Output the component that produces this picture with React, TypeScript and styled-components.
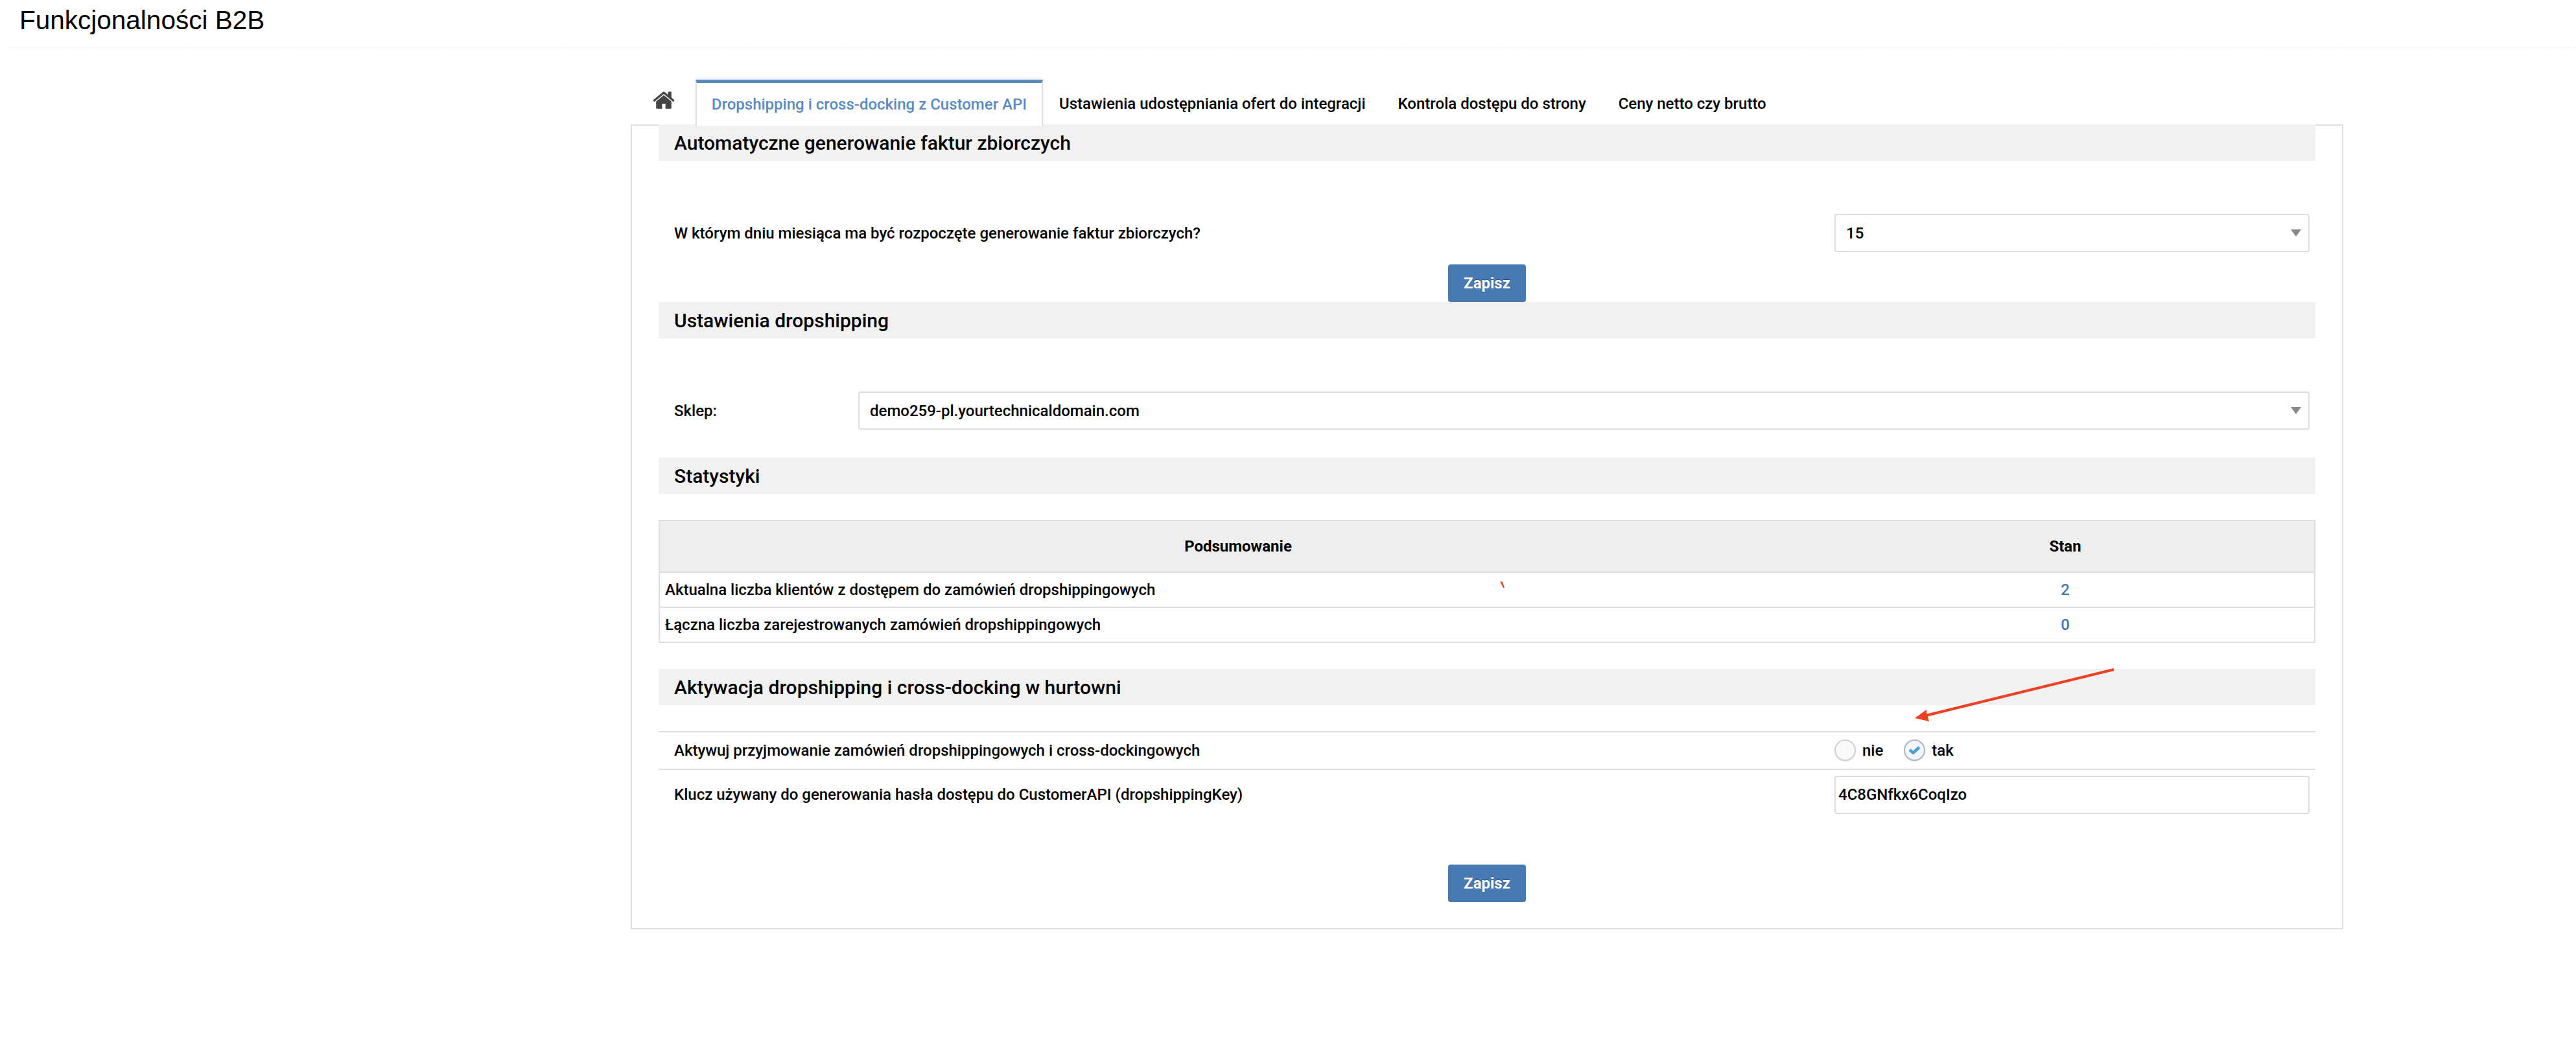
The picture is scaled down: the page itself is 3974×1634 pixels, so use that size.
import styled, { createGlobalStyle } from 'styled-components';

const BORDER = '#dedede';
const BLUE = '#4779b2';

const GlobalStyle = createGlobalStyle`
  html, body {
    margin: 0;
    padding: 0;
    background: #fff;
  }
  body {
    font-family: Roboto, "Liberation Sans", sans-serif;
    font-size: 24px;
    font-weight: 500;
    color: #000;
  }
  * {
    box-sizing: border-box;
  }
`;

const tabs = ['Ustawienia udostępniania ofert do integracji', 'Kontrola dostępu do strony', 'Ceny netto czy brutto'];

export default function App(): JSX.Element {
  return (
    <Page>
      <GlobalStyle />
      <Header>
        <Title>Funkcjonalności B2B</Title>
      </Header>
      <Container>
        <Tabs>
          <HomeTab>
            <svg width="34" height="27" viewBox="0 235 1664 1305" fill="#444">
              <path d="M1408 992v480q0 26-19 45t-45 19h-384v-384h-256v384h-384q-26 0-45-19t-19-45v-480q0-1 .5-3t.5-3l575-474 575 474q1 2 1 6zm223-69l-62 74q-8 9-21 11h-3q-13 0-21-7l-692-577-692 577q-12 8-24 7-13-2-21-11l-62-74q-8-10-7-23.500t11-21.500l719-599q32-26 76-26t76 26l244 204v-195q0-14 9-23t23-9h192q14 0 23 9t9 23v408l219 182q10 8 11 21.500t-7 23.500z" />
            </svg>
          </HomeTab>
          <ActiveTab>Dropshipping i cross-docking z Customer API</ActiveTab>
          {tabs.map((t) => (
            <Tab key={t}>{t}</Tab>
          ))}
        </Tabs>
        <Panel>
          <FirstSectionTitle>Automatyczne generowanie faktur zbiorczych</FirstSectionTitle>
          <FormRow $columns="1fr 733px" $bottom={19}>
            <span>W którym dniu miesiąca ma być rozpoczęte generowanie faktur zbiorczych?</span>
            <SelectWrap>
              <Select defaultValue="15">
                <option>15</option>
              </Select>
            </SelectWrap>
          </FormRow>
          <ButtonRow>
            <SaveButton type="button">Zapisz</SaveButton>
          </ButtonRow>

          <SectionTitle>Ustawienia dropshipping</SectionTitle>
          <FormRow $columns="284px 1fr" $bottom={43}>
            <span>Sklep:</span>
            <SelectWrap>
              <Select defaultValue="demo259-pl.yourtechnicaldomain.com">
                <option>demo259-pl.yourtechnicaldomain.com</option>
              </Select>
            </SelectWrap>
          </FormRow>

          <SectionTitle>Statystyki</SectionTitle>
          <StatsTable>
            <colgroup>
              <col style={{ width: 1785 }} />
              <col />
            </colgroup>
            <thead>
              <tr>
                <th>Podsumowanie</th>
                <th>Stan</th>
              </tr>
            </thead>
            <tbody>
              <tr>
                <td>Aktualna liczba klientów z dostępem do zamówień dropshippingowych</td>
                <ValueCell>2</ValueCell>
              </tr>
              <tr>
                <td>Łączna liczba zarejestrowanych zamówień dropshippingowych</td>
                <ValueCell>0</ValueCell>
              </tr>
            </tbody>
          </StatsTable>

          <SectionTitle>Aktywacja dropshipping i cross-docking w hurtowni</SectionTitle>
          <Options>
            <OptionRow>
              <span>Aktywuj przyjmowanie zamówień dropshippingowych i cross-dockingowych</span>
              <RadioGroup>
                <RadioLabel>
                  <RadioCircle />
                  nie
                </RadioLabel>
                <RadioLabel>
                  <RadioCircle $checked>
                    <svg width="19" height="13" viewBox="0 0 19 13">
                      <path d="M2 6l5.500 4.500L17 2" fill="none" stroke="#4a9fd0" strokeWidth="4.500" />
                    </svg>
                  </RadioCircle>
                  tak
                </RadioLabel>
              </RadioGroup>
            </OptionRow>
            <KeyRow>
              <span>Klucz używany do generowania hasła dostępu do CustomerAPI (dropshippingKey)</span>
              <KeyInput defaultValue="4C8GNfkx6CoqIzo" />
            </KeyRow>
          </Options>
          <BottomButtonRow>
            <SaveButton type="button">Zapisz</SaveButton>
          </BottomButtonRow>
        </Panel>
      </Container>
      <Annotations width="3974" height="1634" viewBox="0 0 3974 1634">
        <path d="M3260.500 1031L2972.500 1101.500L2972 1095L2954 1108L2976 1113L2974 1105.500L3261.500 1035z" fill="#ee4023" />
        <path d="M2314 897l4 1 3 9-2 0z" fill="#ee4023" />
      </Annotations>
    </Page>
  );
}

const Page = styled.div`
  position: relative;
  min-height: 1634px;
`;

const Header = styled.header`
  margin-left: 14px;
  height: 74px;
  padding: 1px 0 0 16px;
  border-bottom: 2px dotted #eeeeee;
`;

const Title = styled.h1`
  margin: 0;
  font-family: 'Liberation Sans', Arial, sans-serif;
  font-size: 40.500px;
  font-weight: 400;
  line-height: 60px;
`;

const Container = styled.main`
  width: 2642px;
  margin: 49px 0 0 973px;
`;

const Tabs = styled.nav`
  display: flex;
  height: 69px;
`;

const Tab = styled.a`
  display: flex;
  align-items: center;
  height: 100%;
  padding: 5px 25px 0;
  white-space: nowrap;
`;

const HomeTab = styled.a`
  display: flex;
  align-items: flex-start;
  width: 100px;
  padding: 18px 0 0 34px;
`;

const ActiveTab = styled(Tab)`
  position: relative;
  z-index: 1;
  height: 71px;
  width: 536px;
  justify-content: center;
  padding: 0;
  color: #5b8ac2;
  background: #fff;
  border-top: 5px solid #5b8bbd;
  border-left: 2px solid ${BORDER};
  border-right: 2px solid ${BORDER};
  box-shadow: 0 -3px 3px rgba(0, 0, 0, 0.08);
`;

const Panel = styled.section`
  height: 1242px;
  padding: 0 41px;
  border: 2px solid ${BORDER};
`;

const SectionTitle = styled.h2`
  display: flex;
  align-items: center;
  height: 56px;
  margin: 0;
  padding-left: 24px;
  background: #f1f1f1;
  font-size: 30px;
  font-weight: 500;
`;

const FirstSectionTitle = styled(SectionTitle)`
  margin-top: -2px;
`;

const FormRow = styled.div<{ $columns: string; $bottom: number }>`
  display: grid;
  grid-template-columns: ${({ $columns }) => $columns};
  align-items: center;
  padding: 82px 9px 0 24px;
  margin-bottom: ${({ $bottom }) => $bottom}px;
`;

const SelectWrap = styled.div`
  position: relative;

  &::after {
    content: '';
    position: absolute;
    top: 24px;
    right: 13px;
    border-left: 8px solid transparent;
    border-right: 8px solid transparent;
    border-top: 11px solid #888;
    pointer-events: none;
  }
`;

const Select = styled.select`
  display: block;
  width: 100%;
  height: 59px;
  padding: 0 16px;
  appearance: none;
  background: #fff;
  border: 2px solid ${BORDER};
  border-radius: 4px;
  color: #000;
  font: inherit;
`;

const ButtonRow = styled.div`
  display: flex;
  justify-content: center;
`;

const BottomButtonRow = styled(ButtonRow)`
  margin-top: 70px;
`;

const SaveButton = styled.button`
  width: 120px;
  height: 58px;
  padding: 0;
  background: ${BLUE};
  border: none;
  border-radius: 4px;
  color: #fff;
  font: inherit;
  font-weight: 700;
  text-shadow: 0 -1px 0 rgba(0, 0, 0, 0.35);
`;

const StatsTable = styled.table`
  width: 100%;
  margin: 40px 0;
  border-collapse: collapse;
  table-layout: fixed;

  th {
    height: 80px;
    background: #eeeeee;
    font-weight: 700;
    border: 2px solid ${BORDER};
  }

  td {
    height: 54px;
    padding: 0 8px;
    border: 2px solid ${BORDER};
  }

  td + td,
  th + th {
    border-left: none;
  }

  th:first-child,
  td:first-child {
    border-right: none;
  }
`;

const ValueCell = styled.td`
  color: ${BLUE};
  text-align: center;
`;

const Options = styled.div`
  margin-top: 40px;
`;

const OptionRow = styled.div`
  display: grid;
  grid-template-columns: 1790px 1fr;
  align-items: center;
  height: 60px;
  padding-left: 24px;
  border-top: 2px solid ${BORDER};
  border-bottom: 2px solid ${BORDER};
`;

const KeyRow = styled(OptionRow)`
  height: 76px;
  padding-right: 9px;
  border: none;
`;

const RadioGroup = styled.div`
  display: flex;
  gap: 32px;
`;

const RadioLabel = styled.label`
  display: flex;
  align-items: center;
  gap: 10px;
`;

const RadioCircle = styled.span<{ $checked?: boolean }>`
  display: flex;
  align-items: center;
  justify-content: center;
  width: 33px;
  height: 33px;
  margin-top: -2px;
  border: 2px solid ${({ $checked }) => ($checked ? '#a9b8c6' : '#cfd2d4')};
  border-radius: 50%;
  background: ${({ $checked }) => ($checked ? '#f2f6fa' : '#fafafa')};
  box-shadow: 0 1px 1px rgba(0, 0, 0, 0.1);
`;

const KeyInput = styled.input`
  display: block;
  width: 100%;
  height: 59px;
  padding: 0 4px;
  border: 2px solid ${BORDER};
  border-radius: 4px;
  color: #000;
  font: inherit;
`;

const Annotations = styled.svg`
  position: absolute;
  top: 0;
  left: 0;
  pointer-events: none;
`;
